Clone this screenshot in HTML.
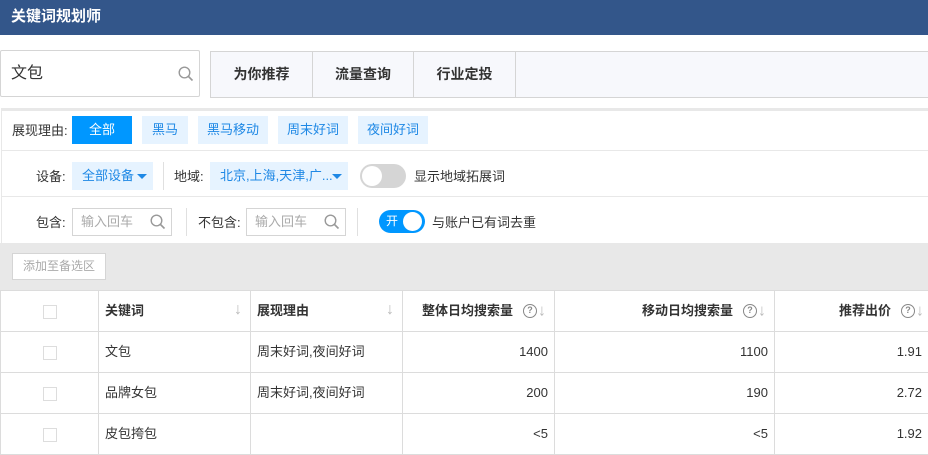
<!DOCTYPE html>
<html><head><meta charset="utf-8"><style>
*{box-sizing:border-box;margin:0;padding:0}
body{width:928px;height:452px;overflow:hidden;background:#fff;font-family:"Liberation Sans","Noto Sans CJK SC",sans-serif;font-size:13px;color:#333;position:relative}
.a{position:absolute}
.hdr{left:0;top:0;width:928px;height:35px;background:#33568a;color:#fff;font-weight:bold;font-size:15px;line-height:33px;padding-left:11px}
.sb{left:0;top:50px;width:200px;height:47px;border:1px solid #d5d5d5;border-radius:2px;font-size:16px;line-height:45px;padding-left:10px}
.tabs{left:210px;top:51px;width:718px;height:47px;border:1px solid #d5d5d5;border-right:none;background:#f7f8fc}
.tab{position:absolute;top:0;height:45px;line-height:45px;text-align:center;font-weight:bold;font-size:14px;border-right:1px solid #d5d5d5}
.panel{left:1px;top:108px;width:927px;height:182px;border-top:3px solid #e8e8e8;border-left:1px solid #e8e8e8}
.hl{height:1px;background:#e8e8e8;left:1px;width:927px}
.lbl{font-size:13px;line-height:16px}
.btn{height:28px;line-height:28px;text-align:center;background:#e6f3ff;color:#1e88e5;font-size:13px}
.dd{height:28px;line-height:28px;background:#e6f3ff;color:#1e88e5;padding-left:10px;font-size:13px}
.tri{position:absolute;right:6px;top:12px;border:5px solid transparent;border-top:5px solid #1e88e5;border-bottom:0}
.vl{width:1px;background:#e0e0e0}
.inp{height:28px;border:1px solid #d5d5d5;color:#aaa;line-height:26px;padding-left:8px;font-size:13px}
.gray{left:0;top:243px;width:928px;height:47px;background:#e8e8e8}
table{position:absolute;left:0;top:290px;border-collapse:collapse;width:928px;table-layout:fixed}
td,th{border:1px solid #dcdcdc;height:41px;font-size:13px;padding:0 6px;position:relative;vertical-align:middle;line-height:16px}
th{font-weight:bold}
.cb{display:inline-block;width:14px;height:14px;border:1px solid #ddd;background:#fff;vertical-align:middle}
.r{text-align:right}
.ar{color:#bbb;font-weight:normal;position:absolute;right:8px;top:11px;font-size:16px}
.q{display:inline-block;width:14px;height:14px;border:1.5px solid #888;border-radius:50%;font-size:9px;line-height:11px;text-align:center;color:#888;font-weight:bold;margin:0 1px 0 10px;vertical-align:middle}
.ar2{color:#bbb;font-weight:normal;font-size:16px;vertical-align:middle}
</style></head><body>
<div class="a hdr">关键词规划师</div>
<div class="a sb">文包<svg class="a" style="left:177px;top:15px" width="16" height="16" viewBox="0 0 16 16"><circle cx="6.5" cy="6.5" r="5.3" fill="none" stroke="#999" stroke-width="1.4"/><path d="M10.5 10.5l4 4" stroke="#999" stroke-width="1.6"/></svg></div>
<div class="a tabs">
<div class="tab" style="left:0;width:102px">为你推荐</div>
<div class="tab" style="left:102px;width:101px">流量查询</div>
<div class="tab" style="left:203px;width:102px">行业定投</div>
</div>
<div class="a panel"></div>
<div class="a hl" style="top:150px"></div>
<div class="a hl" style="top:196px"></div>
<div class="a lbl" style="left:12px;top:123px">展现理由:</div>
<div class="a btn" style="left:72px;top:116px;width:60px;background:#0097ff;color:#fff">全部</div>
<div class="a btn" style="left:142px;top:116px;width:46px">黑马</div>
<div class="a btn" style="left:198px;top:116px;width:70px">黑马移动</div>
<div class="a btn" style="left:278px;top:116px;width:70px">周末好词</div>
<div class="a btn" style="left:358px;top:116px;width:70px">夜间好词</div>

<div class="a lbl" style="left:36px;top:169px">设备:</div>
<div class="a dd" style="left:72px;top:162px;width:81px">全部设备<span class="tri"></span></div>
<div class="a vl" style="left:163px;top:162px;height:28px"></div>
<div class="a lbl" style="left:174px;top:169px">地域:</div>
<div class="a dd" style="left:210px;top:162px;width:138px">北京,上海,天津,广...<span class="tri"></span></div>
<div class="a" style="left:360px;top:164px;width:46px;height:24px;border-radius:12px;background:#d5d5d5"><div class="a" style="left:2px;top:2px;width:20px;height:20px;border-radius:50%;background:#fff"></div></div>
<div class="a lbl" style="left:414px;top:169px">显示地域拓展词</div>

<div class="a lbl" style="left:36px;top:215px">包含:</div>
<div class="a inp" style="left:72px;top:208px;width:100px">输入回车<svg class="a" style="left:77px;top:5px" width="16" height="16" viewBox="0 0 16 16"><circle cx="6.5" cy="6.5" r="5.3" fill="none" stroke="#999" stroke-width="1.4"/><path d="M10.5 10.5l4 4" stroke="#999" stroke-width="1.6"/></svg></div>
<div class="a vl" style="left:186px;top:208px;height:28px"></div>
<div class="a lbl" style="left:198px;top:215px">不包含:</div>
<div class="a inp" style="left:246px;top:208px;width:100px">输入回车<svg class="a" style="left:77px;top:5px" width="16" height="16" viewBox="0 0 16 16"><circle cx="6.5" cy="6.5" r="5.3" fill="none" stroke="#999" stroke-width="1.4"/><path d="M10.5 10.5l4 4" stroke="#999" stroke-width="1.6"/></svg></div>
<div class="a vl" style="left:357px;top:208px;height:28px"></div>
<div class="a" style="left:379px;top:210px;width:46px;height:23px;border-radius:12px;background:#0097ff;color:#fff;font-size:12px;line-height:23px;padding-left:7px">开<div class="a" style="left:24px;top:2px;width:19px;height:19px;border-radius:50%;background:#fff"></div></div>
<div class="a lbl" style="left:432px;top:215px">与账户已有词去重</div>

<div class="a gray"><div class="a" style="left:12px;top:10px;width:94px;height:27px;background:#fff;border:1px solid #d5d5d5;color:#aaa;font-size:12px;line-height:25px;text-align:center">添加至备选区</div></div>

<table>
<colgroup><col style="width:98px"><col style="width:152px"><col style="width:152px"><col style="width:152px"><col style="width:220px"><col style="width:154px"></colgroup>
<tr><th style="text-align:right;padding-right:41px"><span class="cb"></span></th><th style="text-align:left">关键词<span class="ar">↓</span></th><th style="text-align:left">展现理由<span class="ar">↓</span></th><th class="r" style="padding-right:8px">整体日均搜索量<span class="q">?</span><span class="ar2">↓</span></th><th class="r" style="padding-right:8px">移动日均搜索量<span class="q">?</span><span class="ar2">↓</span></th><th class="r" style="padding-right:4px">推荐出价<span class="q">?</span><span class="ar2">↓</span></th></tr>
<tr><td style="text-align:right;padding-right:41px"><span class="cb"></span></td><td>文包</td><td>周末好词,夜间好词</td><td class="r">1400</td><td class="r">1100</td><td class="r">1.91</td></tr>
<tr><td style="text-align:right;padding-right:41px"><span class="cb"></span></td><td>品牌女包</td><td>周末好词,夜间好词</td><td class="r">200</td><td class="r">190</td><td class="r">2.72</td></tr>
<tr><td style="text-align:right;padding-right:41px"><span class="cb"></span></td><td>皮包挎包</td><td></td><td class="r">&lt;5</td><td class="r">&lt;5</td><td class="r">1.92</td></tr>
</table>
</body></html>
